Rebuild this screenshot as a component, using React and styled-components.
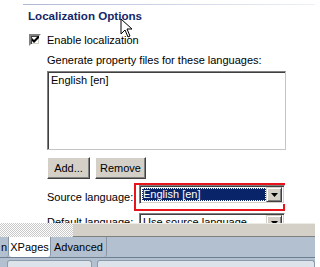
import styled, { createGlobalStyle } from 'styled-components';

const Global = createGlobalStyle`
  html, body { margin: 0; padding: 0; background: #fff; }
  body { font-family: "Liberation Sans", Arial, sans-serif; font-size: 11px; color: #000; }
`;

const Screen = styled.div`
  width: 315px;
  height: 267px;
  overflow: hidden;
  display: flex;
  flex-direction: column;
  background: #fff;
`;

//parte superior con las opciones
const Panel = styled.div`
  position: relative;
  height: 223px;
  flex: none;
  overflow: hidden;
  padding-top: 4px;
  box-sizing: border-box;
`;

const HeadLine = styled.div`
  margin-left: 23px;
  width: 292px;
  height: 1px;
  background: linear-gradient(90deg, #aeb8d2 0%, #c8d0e2 40%, #eef0f6 100%);
`;

const Title = styled.div`
  margin: 4px 0 0 28px;
  font-weight: 700;
  font-size: 11.6px;
  line-height: 14px;
  color: #14276a;
`;

const CheckRow = styled.label`
  display: flex;
  align-items: center;
  gap: 6px;
  margin: 10px 0 0 29px;
  height: 13px;
`;

const CheckBox = styled.span`
  width: 8px;
  height: 8px;
  border: 2px solid;
  border-color: #808080 #fff #fff #808080;
  box-shadow: inset 1px 1px 0 #404040, inset -1px -1px 0 #d4d0c8;
  background: #fff;
  display: flex;
  align-items: center;
  justify-content: center;
`;

const Content = styled.div`
  margin-left: 47px;
  display: flex;
  flex-direction: column;
`;

const Label = styled.div`
  line-height: 13px;
  white-space: nowrap;
  margin-top: 8px;
  margin-bottom: 4px;
`;

const ListBox = styled.div`
  width: 239px;
  height: 79px;
  box-sizing: border-box;
  border: 1px solid;
  border-color: #808080 #c4c4c4 #c4c4c4 #808080;
  box-shadow: inset 1px 1px 0 #404040;
  padding: 2px 0 0 3px;
  line-height: 13px;
`;

const Buttons = styled.div`
  display: flex;
  gap: 5px;
  margin-top: 7px;
`;

const Button = styled.button`
  font: inherit;
  color: #000;
  width: ${({ $w }) => $w}px;
  height: 22px;
  padding: 0;
  background: #d4d0c8;
  border: 1px solid;
  border-color: #fff #404040 #404040 #fff;
  box-shadow: inset -1px -1px 0 #808080;
`;

const FieldRow = styled.div`
  display: flex;
  align-items: center;
  margin-top: ${({ $top }) => $top}px;
  height: ${({ $h }) => $h}px;
`;

const FieldLabel = styled.div`
  width: ${({ $w }) => $w}px;
  line-height: 13px;
  white-space: nowrap;
`;

const Highlight = styled.div`
  width: 151px;
  height: 28px;
  box-sizing: border-box;
  border: 2px solid #e8141c;
  padding: 0 0 0 3px;
`;

const Combo = styled.div`
  display: flex;
  width: 146px;
  height: 19px;
  box-sizing: border-box;
  border: 1px solid;
  border-color: #808080 #fff #fff #808080;
  box-shadow: inset 1px 1px 0 #404040, inset -1px -1px 0 #d4d0c8;
  padding: 2px;
  background: #fff;
`;

const ComboText = styled.div`
  flex: 1;
  line-height: 13px;
  padding-left: 1px;
  background: ${({ $sel }) => ($sel ? '#0a246a' : 'transparent')};
  color: ${({ $sel }) => ($sel ? '#fff' : '#000')};
  outline: ${({ $sel }) => ($sel ? '1px dotted #fff' : 'none')};
  outline-offset: -1px;
  white-space: nowrap;
  overflow: hidden;
`;

const ComboArrow = styled.div`
  width: 16px;
  box-sizing: border-box;
  background: #d4d0c8;
  border: 1px solid;
  border-color: #d4d0c8 #404040 #404040 #d4d0c8;
  box-shadow: inset 1px 1px 0 #fff, inset -1px -1px 0 #808080;
  display: flex;
  align-items: center;
  justify-content: center;
  margin-top: -1px;
  margin-bottom: -1px;
`;

const Cursor = styled.svg`
  position: absolute;
  left: 120px;
  top: 18px;
`;

//barra divisoria
const Divider = styled.div`
  display: flex;
  height: 14px;
  flex: none;
`;

const Checker = styled.div`
  width: 73px;
  background: repeating-conic-gradient(#c8c8c8 0 25%, #fff 0 50%) 0 0 / 2px 2px;
`;

const Sash = styled.div`
  flex: 1;
  background: #d4d0c8;
  border-top: 1px solid #ecebe6;
  border-bottom: 1px solid #808080;
`;

const TabBar = styled.div`
  display: flex;
  height: 20px;
  flex: none;
  background: #b3c0cf;
  border-bottom: 1px solid #6f7f93;
`;

const Tab = styled.div`
  display: flex;
  align-items: center;
  box-sizing: border-box;
  width: ${({ $w }) => $w}px;
  justify-content: ${({ $end }) => ($end ? 'flex-end' : 'center')};
  padding-right: ${({ $end }) => ($end ? 1 : 0)}px;
  font-size: 11px;
  background: ${({ $active }) => ($active ? '#fff' : 'transparent')};
  border-right: 1px solid #8a96a6;
  border-radius: 0 0 3px 3px;
  white-space: nowrap;
  overflow: hidden;
`;

const Bottom = styled.div`
  flex: 1;
  background: #b3c0cf;
  display: flex;
  gap: 5px;
  padding: 2px 0 0 7px;
`;

const Slot = styled.div`
  width: ${({ $w }) => $w}px;
  border: 1px solid #8d9aab;
  border-bottom: none;
  border-radius: 3px 3px 0 0;
  background: #dde3ea;
`;

const Arrow = () => (
  <svg width="7" height="4" viewBox="0 0 7 4"><path d="M0 0h7L3.5 4z" fill="#000" /></svg>
);

export default function App() {
  return (
    <>
      <Global />
      <Screen>
        <Panel>
          <HeadLine />
          <Title>Localization Options</Title>
          <CheckRow>
            <CheckBox>
              <svg width="7" height="7" viewBox="0 0 7 7">
                <path d="M0 2v3l2 2 5-5V-1L2 4z" fill="#000" />
              </svg>
            </CheckBox>
            <span>Enable localization</span>
          </CheckRow>
          <Content>
            <Label>Generate property files for these languages:</Label>
            <ListBox>English [en]</ListBox>
            <Buttons>
              <Button $w={43}>Add...</Button>
              <Button $w={51}>Remove</Button>
            </Buttons>
            <FieldRow $top={4} $h={28}>
              <FieldLabel $w={87}>Source language:</FieldLabel>
              <Highlight>
                <Combo>
                  <ComboText $sel>English [en]</ComboText>
                  <ComboArrow><Arrow /></ComboArrow>
                </Combo>
              </Highlight>
            </FieldRow>
            <FieldRow $top={2} $h={19}>
              <FieldLabel $w={92}>Default language:</FieldLabel>
              <Combo>
                <ComboText>Use source language</ComboText>
                <ComboArrow><Arrow /></ComboArrow>
              </Combo>
            </FieldRow>
          </Content>
          <Cursor width="13" height="20" viewBox="0 0 13 20">
            <path d="M1 1v15l4-4 3 7 2-1-3-7h5z" fill="#fff" stroke="#000" strokeWidth="1" />
          </Cursor>
        </Panel>
        <Divider>
          <Checker />
          <Sash />
        </Divider>
        <TabBar>
          <Tab $w={9} $end>n</Tab>
          <Tab $w={42} $active>XPages</Tab>
          <Tab $w={56}>Advanced</Tab>
        </TabBar>
        <Bottom>
          <Slot $w={85} />
          <Slot $w={220} />
        </Bottom>
      </Screen>
    </>
  );
}
